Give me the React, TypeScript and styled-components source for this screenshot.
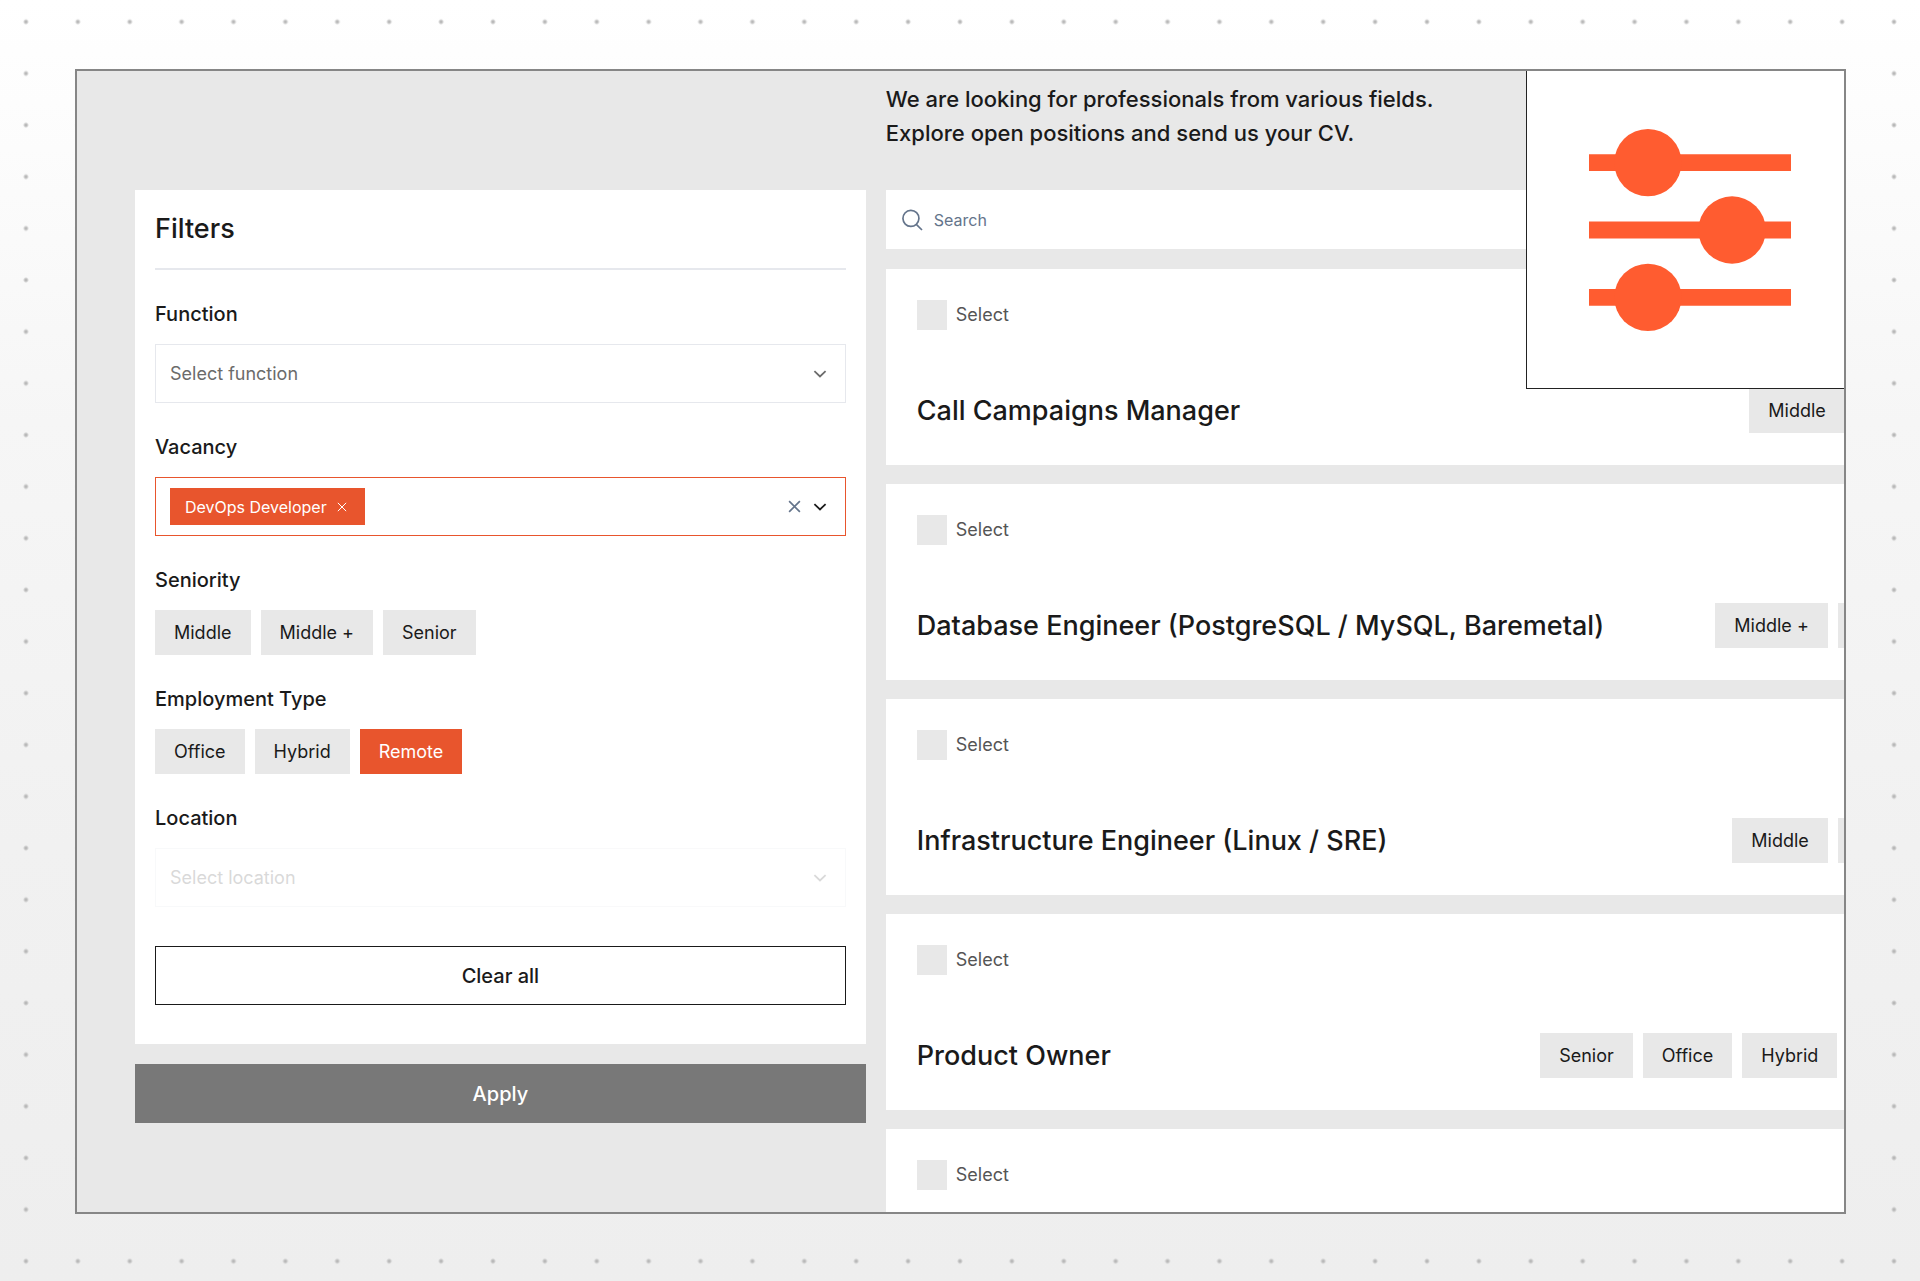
import React, { useId, useState } from "react";
import styled, { createGlobalStyle, css } from "styled-components";

const color = {
  surface: "#e8e8e8",
  ink: "#1a1a1a",
  muted: "#6b6b6b",
  slate: "#64748b",
  line: "#e6e8ed",
  accent: "#e8552d",
  brand: "#ff5c30",
  frame: "#868686",
};

const GlobalStyle = createGlobalStyle`
  *, *::before, *::after { box-sizing: border-box; }
  body {
    margin: 0;
    color: ${color.ink};
    font-family: Inter, "Liberation Sans", sans-serif;
    -webkit-font-smoothing: antialiased;
  }
  button, input, select { font-family: inherit; color: inherit; margin: 0; border-radius: 0; }
  h1, h2, p { margin: 0; }
`;

const Page = styled.div`
  display: flex;
  height: 100vh;
  padding: 69px 74px 67px 75px;
  background:
    radial-gradient(circle, #b8b8b8 1px, transparent 3px) 0 -4px / calc(100% / 37) calc(100% / 24.8),
    linear-gradient(#ffffff, #fdfdfd 8%, #f6f6f6 33%, #f1f1f1 66%, #eeeeee);
`;

const Frame = styled.main`
  position: relative;
  flex: 1;
  min-width: 0;
  overflow: hidden;
  border: 2px solid ${color.frame};
  background: ${color.surface};
`;

const Columns = styled.div`
  display: grid;
  grid-template-columns: 2fr 3fr;
  gap: 20px;
  margin: 0 -138px 0 58px;
`;

const Sidebar = styled.form`
  display: flex;
  flex-direction: column;
  gap: 20px;
  padding-top: 119px;
`;

const Panel = styled.section`
  padding: 20px 20px 39px;
  background: #fff;
`;

const PanelTitle = styled.h2`
  padding-bottom: 20px;
  border-bottom: 2px solid ${color.line};
  font-size: 27px;
  font-weight: 500;
  line-height: 38px;
`;

const Groups = styled.div`
  display: flex;
  flex-direction: column;
  gap: 29px;
  padding: 29px 0 39px;
`;

const Group = styled.div`
  display: flex;
  flex-direction: column;
  gap: 15px;
`;

const labelText = css`
  font-size: 20px;
  font-weight: 500;
  line-height: 30px;
`;

const Label = styled.label`
  ${labelText}
`;

const GroupTitle = styled.span`
  ${labelText}
`;

const Field = styled.div<{ $active?: boolean; $disabled?: boolean }>`
  display: flex;
  align-items: center;
  height: 59px;
  padding: 0 18px 0 14px;
  border: 1px solid ${(p) => (p.$active ? color.accent : color.line)};
  color: ${(p) => (p.$active ? color.ink : color.muted)};
  opacity: ${(p) => (p.$disabled ? 0.25 : 1)};
`;

const Select = styled.select`
  flex: 1;
  min-width: 0;
  height: 100%;
  padding: 0;
  border: 0;
  outline: 0;
  appearance: none;
  background: transparent;
  color: ${color.muted};
  font-size: 18px;
  opacity: 1;
`;

const Tag = styled.span`
  display: flex;
  align-items: center;
  gap: 10px;
  height: 37px;
  padding: 0 18px 0 15px;
  background: ${color.accent};
  color: #fff;
  font-size: 16px;
`;

const IconButton = styled.button<{ $tint?: string }>`
  display: flex;
  align-items: center;
  padding: 0;
  border: 0;
  background: transparent;
  color: ${(p) => p.$tint ?? "inherit"};
  cursor: pointer;
`;

const FieldIcons = styled.div`
  display: flex;
  gap: 12px;
`;

const ComboInput = styled.input`
  flex: 1;
  min-width: 0;
  height: 100%;
  border: 0;
  outline: 0;
  background: transparent;
  font-size: 18px;
`;

const ChipRow = styled.div`
  display: flex;
  flex: none;
  gap: 10px;
`;

const chipBox = css`
  display: flex;
  align-items: center;
  height: 45px;
  padding: 0 19px;
  border: 0;
  font-size: 18px;
  white-space: nowrap;
`;

const Chip = styled.span`
  ${chipBox}
  background: ${color.surface};
`;

const ChipButton = styled.button<{ $on: boolean }>`
  ${chipBox}
  background: ${(p) => (p.$on ? color.accent : color.surface)};
  color: ${(p) => (p.$on ? "#fff" : color.ink)};
  cursor: pointer;
`;

const ActionButton = styled.button<{ $solid?: boolean }>`
  width: 100%;
  height: 59px;
  border: ${(p) => (p.$solid ? "0" : `1px solid ${color.ink}`)};
  background: ${(p) => (p.$solid ? "#787878" : "#fff")};
  color: ${(p) => (p.$solid ? "#fff" : color.ink)};
  font-size: 20px;
  font-weight: 500;
  cursor: pointer;
`;

const Results = styled.section`
  min-width: 0;
`;

const Intro = styled.p`
  padding: 11px 0 40px;
  font-size: 22px;
  font-weight: 500;
  line-height: 34px;
`;

const SearchBox = styled.label`
  display: flex;
  align-items: center;
  gap: 10px;
  height: 59px;
  margin-bottom: 20px;
  padding: 0 14px;
  background: #fff;
  color: ${color.slate};
`;

const SearchInput = styled.input`
  flex: 1;
  padding: 0;
  border: 0;
  outline: 0;
  background: transparent;
  font-size: 16px;
  &::placeholder { color: ${color.slate}; opacity: 1; }
`;

const CardList = styled.div`
  display: flex;
  flex-direction: column;
  gap: 19px;
`;

const Card = styled.article`
  display: flex;
  flex-direction: column;
  gap: 58px;
  padding: 31px 32px 32px 31px;
  background: #fff;
`;

const Pick = styled.label`
  display: flex;
  align-items: center;
  gap: 9px;
  align-self: flex-start;
  color: #555;
  font-size: 18px;
  line-height: 30px;
`;

const Checkbox = styled.input`
  width: 30px;
  height: 30px;
  appearance: none;
  background: ${color.surface};
  &:checked { background: ${color.accent}; }
`;

const CardBody = styled.div`
  display: flex;
  align-items: center;
  justify-content: space-between;
  gap: 20px;
`;

const CardTitle = styled.h2`
  font-size: 27px;
  font-weight: 500;
  line-height: 45px;
  white-space: nowrap;
`;

const Badge = styled.div`
  position: absolute;
  top: 0;
  right: 0;
  display: flex;
  align-items: center;
  width: 318px;
  height: 318px;
  padding-left: 62px;
  border: solid #222;
  border-width: 0 0 1px 1px;
  background: #fff;
`;

const Chevron = () => (
  <svg width="14" height="14" viewBox="0 0 14 14" fill="none" stroke="currentColor" strokeWidth="1.8" aria-hidden="true">
    <path d="M1.4 4.2 7 9.4l5.6-5.2" />
  </svg>
);

const Cross = ({ size, weight }: { size: number; weight: number }) => (
  <svg width={size} height={size} viewBox="0 0 14 14" fill="none" stroke="currentColor" strokeWidth={weight} aria-hidden="true">
    <path d="M1.2 1.2 12.8 12.8M12.8 1.2 1.2 12.8" />
  </svg>
);

const SearchIcon = () => (
  <svg width="24" height="24" viewBox="0 0 24 24" fill="none" stroke="currentColor" strokeWidth="1.7" aria-hidden="true">
    <path d="m22 22-5.7-5.7m0 0A8 8 0 1 0 5 5a8 8 0 0 0 11.3 11.3Z" />
  </svg>
);

const SlidersIcon = () => (
  <svg width="202" height="202" viewBox="0 0 24 24" fill={color.brand} aria-hidden="true">
    <path d="M0 3h24v2H0zM0 11h24v2H0zM0 19h24v2H0z" />
    <circle cx="7" cy="4" r="4" />
    <circle cx="17" cy="12" r="4" />
    <circle cx="7" cy="20" r="4" />
  </svg>
);

type SelectFieldProps = { label: string; placeholder: string; disabled?: boolean };

const SelectField = ({ label, placeholder, disabled }: SelectFieldProps) => {
  const id = useId();
  return (
    <Group>
      <Label htmlFor={id}>{label}</Label>
      <Field $disabled={disabled}>
        <Select id={id} disabled={disabled} defaultValue="">
          <option value="">{placeholder}</option>
        </Select>
        <Chevron />
      </Field>
    </Group>
  );
};

const VacancyField = () => {
  const id = useId();
  const [tags, setTags] = useState(["DevOps Developer"]);
  return (
    <Group>
      <Label htmlFor={id}>Vacancy</Label>
      <Field $active>
        {tags.map((tag) => (
          <Tag key={tag}>
            {tag}
            <IconButton
              type="button"
              aria-label={`Remove ${tag}`}
              onClick={() => setTags(tags.filter((t) => t !== tag))}
            >
              <Cross size={10} weight={1.4} />
            </IconButton>
          </Tag>
        ))}
        <ComboInput id={id} type="text" />
        <FieldIcons>
          <IconButton type="button" $tint={color.slate} aria-label="Clear vacancies" onClick={() => setTags([])}>
            <Cross size={13} weight={1.8} />
          </IconButton>
          <Chevron />
        </FieldIcons>
      </Field>
    </Group>
  );
};

type ChipGroupProps = { title: string; options: string[]; initial?: string };

const ChipGroup = ({ title, options, initial }: ChipGroupProps) => {
  const id = useId();
  const [active, setActive] = useState(initial);
  return (
    <Group role="group" aria-labelledby={id}>
      <GroupTitle id={id}>{title}</GroupTitle>
      <ChipRow>
        {options.map((option) => (
          <ChipButton
            key={option}
            type="button"
            $on={option === active}
            aria-pressed={option === active}
            onClick={() => setActive(option === active ? undefined : option)}
          >
            {option}
          </ChipButton>
        ))}
      </ChipRow>
    </Group>
  );
};

const vacancies = [
  { title: "Call Campaigns Manager", tags: ["Middle", "Hybrid"] },
  { title: "Database Engineer (PostgreSQL / MySQL, Baremetal)", tags: ["Middle +", "Full-time"] },
  { title: "Infrastructure Engineer (Linux / SRE)", tags: ["Middle", "Full-time"] },
  { title: "Product Owner", tags: ["Senior", "Office", "Hybrid", "Remote"] },
  { title: "System Administrator", tags: ["Middle", "Remote"] },
];

export default function App() {
  return (
    <>
      <GlobalStyle />
      <Page>
        <Frame>
          <Columns>
            <Sidebar onSubmit={(e) => e.preventDefault()}>
              <Panel>
                <PanelTitle>Filters</PanelTitle>
                <Groups>
                  <SelectField label="Function" placeholder="Select function" />
                  <VacancyField />
                  <ChipGroup title="Seniority" options={["Middle", "Middle +", "Senior"]} />
                  <ChipGroup title="Employment Type" options={["Office", "Hybrid", "Remote"]} initial="Remote" />
                  <SelectField label="Location" placeholder="Select location" disabled />
                </Groups>
                <ActionButton type="reset">Clear all</ActionButton>
              </Panel>
              <ActionButton type="submit" $solid>Apply</ActionButton>
            </Sidebar>
            <Results>
              <Intro>
                We are looking for professionals from various fields.
                <br />
                Explore open positions and send us your CV.
              </Intro>
              <SearchBox>
                <SearchIcon />
                <SearchInput type="text" placeholder="Search" aria-label="Search" />
              </SearchBox>
              <CardList>
                {vacancies.map((vacancy) => (
                  <Card key={vacancy.title}>
                    <Pick>
                      <Checkbox type="checkbox" />
                      Select
                    </Pick>
                    <CardBody>
                      <CardTitle>{vacancy.title}</CardTitle>
                      <ChipRow>
                        {vacancy.tags.map((tag) => (
                          <Chip key={tag}>{tag}</Chip>
                        ))}
                      </ChipRow>
                    </CardBody>
                  </Card>
                ))}
              </CardList>
            </Results>
          </Columns>
          <Badge>
            <SlidersIcon />
          </Badge>
        </Frame>
      </Page>
    </>
  );
}
